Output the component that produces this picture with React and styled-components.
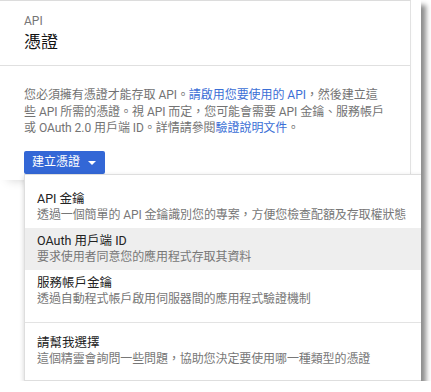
import React from "react";
import styled, { createGlobalStyle } from "styled-components";

const Global = createGlobalStyle`
  html, body { margin: 0; padding: 0; background: #ffffff; }
  body { font-family: Roboto, "Noto Sans CJK TC", "Liberation Sans", sans-serif; }
  * { box-sizing: border-box; }
`;

const Frame = styled.div`
  position: relative;
  width: 421px;
  height: 381px;
  background: #ffffff;
  overflow: hidden;
  box-shadow: 5px 5px 5px rgba(0, 0, 0, 0.45);
`;

const Card = styled.section`
  width: 411px;
  height: 180px;
  border-top: 1px solid #dcdcdc;
  border-right: 1px solid #e2e2e2;
  box-shadow: 0 8px 10px -8px rgba(0, 0, 0, 0.18);
`;

const Header = styled.header`
  height: 65px;
  padding: 12px 24px 0;
  border-bottom: 1px solid #e0e0e0;
`;

const Overline = styled.div`
  font-size: 12px;
  line-height: 16px;
  color: #757575;
`;

const Title = styled.h1`
  margin: 2px 0 0;
  font-size: 17px;
  line-height: 22px;
  font-weight: 400;
  color: #111;
`;

const Body = styled.div`
  padding: 21px 24px 0;
`;

const Paragraph = styled.p`
  margin: 0;
  font-size: 12px;
  line-height: 16.5px;
  color: #737373;
  letter-spacing: -0.05px;
`;

const Link = styled.a`
  color: #3b6fd6;
  text-decoration: none;
`;

const Dropdown = styled.div`
  position: relative;
  display: inline-block;
  margin-top: 14px;
`;

const Button = styled.button`
  display: flex;
  align-items: center;
  gap: 8px;
  height: 23px;
  padding: 0 9px 0 8px;
  border: none;
  border-radius: 2px;
  background: #3367d6;
  color: #ffffff;
  font-family: inherit;
  font-size: 12px;
  line-height: 23px;
  cursor: pointer;
`;

const Caret = styled.span`
  width: 0;
  height: 0;
  border-left: 4px solid transparent;
  border-right: 4px solid transparent;
  border-top: 4px solid #ffffff;
  margin-top: 1px;
`;

const Menu = styled.ul`
  position: absolute;
  top: 100%;
  left: 0;
  width: 420px;
  margin: 0;
  padding: 11px 0 8px;
  list-style: none;
  background: #ffffff;
  border: 1px solid #dedede;
  box-shadow: 0 2px 5px rgba(0, 0, 0, 0.18);
`;

const Item = styled.li`
  height: 42px;
  padding: 5px 12px 4px 12px;
  background: ${(p) => (p.$active ? "#eeeeee" : "transparent")};
  white-space: nowrap;
`;

const ItemTitle = styled.div`
  font-size: 12.5px;
  line-height: 16px;
  color: #222;
`;

const ItemDesc = styled.div`
  font-size: 12px;
  line-height: 17px;
  color: #777;
  letter-spacing: -0.1px;
`;

const Divider = styled.li`
  height: 1px;
  margin: 10px 0 7px;
  background: #e3e3e3;
`;

const items = [
  { title: "API 金鑰", desc: "透過一個簡單的 API 金鑰識別您的專案，方便您檢查配額及存取權狀態" },
  { title: "OAuth 用戶端 ID", desc: "要求使用者同意您的應用程式存取其資料", active: true },
  { title: "服務帳戶金鑰", desc: "透過自動程式帳戶啟用伺服器間的應用程式驗證機制" },
];

export default function App() {
  return (
    <>
      <Global />
      <Frame>
        <Card>
          <Header>
            <Overline>API</Overline>
            <Title>憑證</Title>
          </Header>
          <Body>
            <Paragraph>
              您必須擁有憑證才能存取 API。<Link href="#">請啟用您要使用的 API</Link>，然後建立這些 API 所需的憑證。視 API 而定，您可能會需要 API 金鑰、服務帳戶或 OAuth 2.0 用戶端 ID。詳情請參閱<Link href="#">驗證說明文件</Link>。
            </Paragraph>
            <Dropdown>
              <Button>
                建立憑證
                <Caret />
              </Button>
              <Menu>
                {items.map((it) => (
                  <Item key={it.title} $active={it.active}>
                    <ItemTitle>{it.title}</ItemTitle>
                    <ItemDesc>{it.desc}</ItemDesc>
                  </Item>
                ))}
                <Divider />
                <Item>
                  <ItemTitle>請幫我選擇</ItemTitle>
                  <ItemDesc>這個精靈會詢問一些問題，協助您決定要使用哪一種類型的憑證</ItemDesc>
                </Item>
              </Menu>
            </Dropdown>
          </Body>
        </Card>
      </Frame>
    </>
  );
}
